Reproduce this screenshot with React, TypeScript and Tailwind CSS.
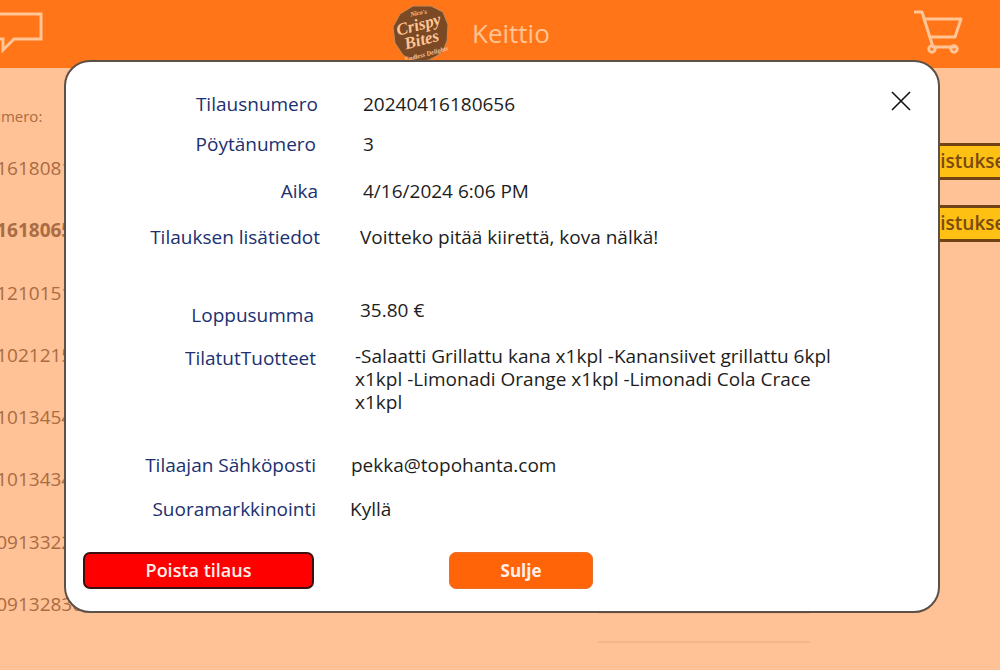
import React from 'react';

const orderNumbers = [
  { id: '20240416180816', bold: false },
  { id: '20240416180656', bold: true },
  { id: '20240412101512', bold: false },
  { id: '20240410212150', bold: false },
  { id: '20240410134540', bold: false },
  { id: '20240410134340', bold: false },
  { id: '20240409133220', bold: false },
  { id: '20240409132830', bold: false },
];

const Logo = () => (
  <svg width="60" height="60" viewBox="0 0 60 60" className="shrink-0">
    <path d="M22 3 L40 3 L52 9 L57 22 L56 38 L51 50 L38 57 L24 59 L12 52 L4 40 L2 24 L9 11 Z" fill="#7b4a25" stroke="#c98a55" strokeWidth="1" />
    <g fill="#ffc596" fontFamily="'Liberation Serif', serif" fontStyle="italic" fontWeight="700" textAnchor="middle">
      <text x="28" y="12" fontSize="6.5" transform="rotate(-10 28 12)">Nico's</text>
      <text x="29" y="27" fontSize="17" transform="rotate(-15 29 27)">Crispy</text>
      <text x="32" y="42" fontSize="17" transform="rotate(-15 32 42)">Bites</text>
      <text x="36" y="53" fontSize="6.5" transform="rotate(-15 36 53)">Endless Delights</text>
    </g>
  </svg>
);

const Row = ({ label, labelRight, valueLeft, className, children }: { label: string; labelRight: string; valueLeft: string; className: string; children: React.ReactNode }) => (
  <div className={`flex items-start ${className}`}>
    <div className={`text-right text-[#20306f] ${labelRight}`}>{label}</div>
    <div className={`text-[#1d1d1d] ${valueLeft}`}>{children}</div>
  </div>
);

export default function App() {
  return (
    <div className="relative h-[670px] w-[1000px] overflow-hidden bg-[#ffc196] text-[19px] font-['Open_Sans',sans-serif]">
      <header className="flex h-[68px] items-start bg-[#ff7518]">
        <svg width="44" height="52" viewBox="0 0 44 52" fill="none" stroke="#ffc596" strokeWidth="3" className="mt-[12px] shrink-0">
          <path d="M-2 2 H41 V27 H14 L3 38 V27 H-2" />
        </svg>
        <div className="ml-[347px] mt-[3px] flex items-center">
          <Logo />
          <span className="ml-[21px] text-[26px] leading-[48px] text-[#ffc596]">Keittio</span>
        </div>
        <svg width="50" height="44" viewBox="0 0 50 44" fill="none" stroke="#ffc596" strokeWidth="3" strokeLinejoin="round" className="ml-auto mr-[37px] mt-[10px]">
          <path d="M1 2 H9 L20 37 H42" />
          <path d="M12 9 H48 L42 27 H17" />
          <circle cx="19" cy="39" r="3.2" />
          <circle cx="41" cy="39" r="3.2" />
        </svg>
      </header>

      <div className="flex">
        <div className="-ml-[69px] w-[200px] shrink-0 text-[#aa6c42]">
          <div className="mt-[38px] pl-[11px] text-[15px] leading-[20px]">Tilausnumero:</div>
          <div className="mt-[27px] flex flex-col gap-[32.3px]">
            {orderNumbers.map((order) => (
              <div key={order.id} className={`leading-[30px] ${order.bold ? 'font-bold' : ''}`}>
                {order.id}
              </div>
            ))}
          </div>
        </div>
        <div className="ml-[467px] mt-[544px] h-[31px] w-[212px] shrink-0 border-y-2 border-[#f3b68e]" />
        <div className="absolute right-[-60px] top-[143px] flex flex-col gap-[25px]">
          {[0, 1].map((i) => (
            <div key={i} className="flex h-[37px] w-[300px] items-center border-y-[3px] border-l-2 border-[#6f4316] bg-[#ffc014] pl-[132px] font-semibold text-[#7a4a10]">
              Valmistukseen
            </div>
          ))}
        </div>
      </div>

      {/* order details dialog */}
      <div className="absolute left-[64px] top-[60px] h-[553px] w-[876px] rounded-[26px] border-2 border-[#5c5047] bg-white pl-[1px]">
        <svg width="20" height="20" viewBox="0 0 20 20" stroke="#111" strokeWidth="1.6" className="absolute right-[27px] top-[29px]">
          <path d="M1 1 L19 19 M19 1 L1 19" />
        </svg>

        <Row label="Tilausnumero" labelRight="w-[251px]" valueLeft="ml-[45px]" className="mt-[28px] leading-[28px]">20240416180656</Row>
        <Row label="Pöytänumero" labelRight="w-[249px]" valueLeft="ml-[47px]" className="mt-[12px] leading-[28px]">3</Row>
        <Row label="Aika" labelRight="w-[251px]" valueLeft="ml-[45px]" className="mt-[19px] leading-[28px]">4/16/2024 6:06 PM</Row>
        <Row label="Tilauksen lisätiedot" labelRight="w-[253px]" valueLeft="ml-[40px]" className="mt-[18px] leading-[28px]">Voitteko pitää kiirettä, kova nälkä!</Row>
        <Row label="Loppusumma" labelRight="w-[247px] mt-[5px]" valueLeft="ml-[46px]" className="mt-[45px] leading-[28px]">35.80 €</Row>
        <Row label="TilatutTuotteet" labelRight="w-[249px] -mt-[1px]" valueLeft="ml-[39px] w-[490px] leading-[23px]" className="mt-[16px] leading-[28px]">
          -Salaatti Grillattu kana x1kpl -Kanansiivet grillattu 6kpl x1kpl -Limonadi Orange x1kpl -Limonadi Cola Crace x1kpl
        </Row>
        <Row label="Tilaajan Sähköposti" labelRight="w-[249px]" valueLeft="ml-[35px]" className="mt-[37px] leading-[28px]">pekka@topohanta.com</Row>
        <Row label="Suoramarkkinointi" labelRight="w-[249px]" valueLeft="ml-[34px]" className="mt-[16px] leading-[28px]">Kyllä</Row>

        <div className="mt-[29px] flex items-start pl-[16px]">
          <button className="h-[37px] w-[231px] rounded-[7px] border-2 border-[#3a1010] bg-[#ff0000] text-[18px] font-semibold text-[#fff0ea]">Poista tilaus</button>
          <button className="ml-[135px] h-[37px] w-[144px] rounded-[7px] border border-[#e8702a] bg-[#ff6409] text-[17px] font-bold text-[#fff0ea]">Sulje</button>
        </div>
      </div>
    </div>
  );
}
